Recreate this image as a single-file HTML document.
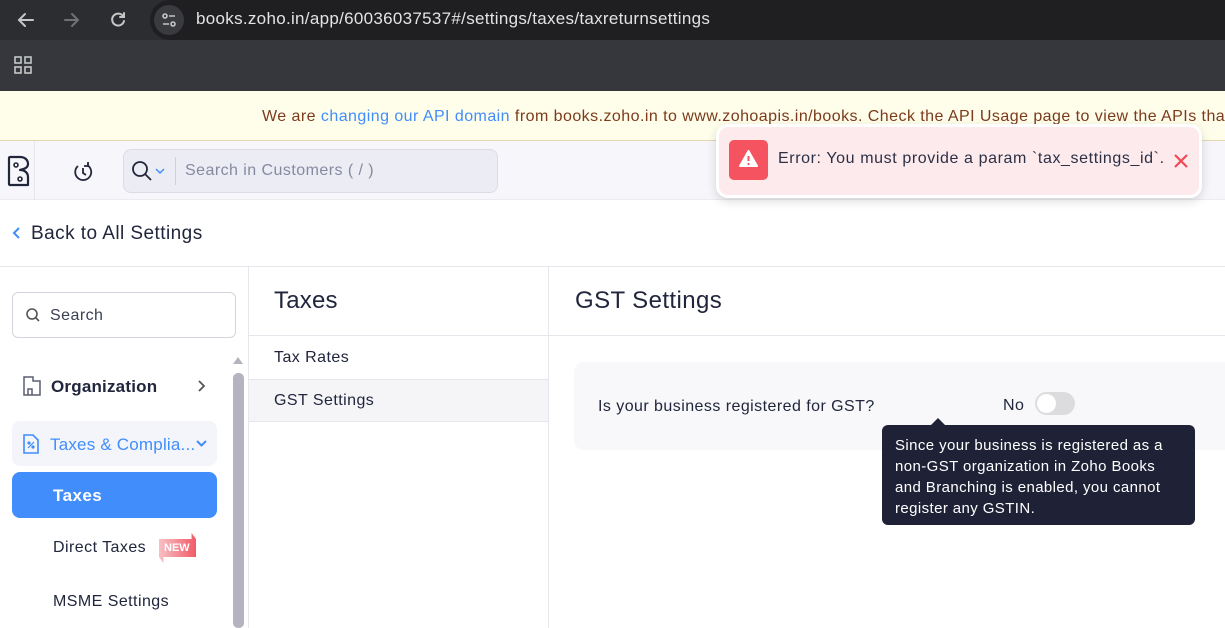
<!DOCTYPE html>
<html><head><style>
*{margin:0;padding:0;box-sizing:border-box}
body{width:1225px;height:628px;overflow:hidden;font-family:"Liberation Sans",sans-serif;background:#fff;position:relative;color:#21263c;letter-spacing:0.45px}
.a{position:absolute;white-space:nowrap}
</style></head><body>
<div class="a" style="left:0;top:0;width:1225px;height:40px;background:#2c2d31"></div>
<div class="a" style="left:150px;top:0;width:1075px;height:40px;background:#1f1f22;border-radius:20px 0 0 20px"></div>
<svg class="a" style="left:14px;top:8px" width="120" height="24" viewBox="0 0 120 24" fill="none" stroke-width="2" stroke-linecap="round">
<path d="M19 12H6M11 6l-6 6 6 6" stroke="#c4c7c5"/>
<path d="M51 12h13M58 6l6 6-6 6" stroke="#6f7175"/>
<path d="M109 8a6 6 0 1 0 1 5M110 5v4h-4" stroke="#c4c7c5"/>
</svg>
<div class="a" style="left:154px;top:5px;width:30px;height:30px;border-radius:15px;background:#3a3b3f"></div>
<svg class="a" style="left:161px;top:12px" width="16" height="16" viewBox="0 0 16 16" fill="none" stroke="#c4c7c5" stroke-width="1.6"><circle cx="4" cy="4" r="2"/><path d="M8 4h6M2 12h6"/><circle cx="12" cy="12" r="2"/></svg>
<div class="a" style="left:196px;top:9px;font-size:17px;color:#e3e3e3;letter-spacing:0.3px">books.zoho.in/app/60036037537#/settings/taxes/taxreturnsettings</div>
<div class="a" style="left:0;top:40px;width:1225px;height:51px;background:#36373c"></div>
<svg class="a" style="left:14px;top:56px" width="19" height="19" viewBox="0 0 19 19" fill="none" stroke="#c4c7c5" stroke-width="1.6"><rect x="1" y="1" width="6" height="6"/><rect x="11" y="1" width="6" height="6"/><rect x="1" y="11" width="6" height="6"/><rect x="11" y="11" width="6" height="6"/></svg>
<div class="a" style="left:0;top:91px;width:1225px;height:50px;background:#fefeeb;border-bottom:1px solid #e3d6b0"></div>
<div class="a" style="left:262px;top:108px;font-size:16px;color:#7d3a1c">We are <span style="color:#408dfb">changing our API domain</span> from books.zoho.in to www.zohoapis.in/books. Check the API Usage page to view the APIs that</div>
<div class="a" style="left:0;top:141px;width:1225px;height:59px;background:#f7f7fb;border-bottom:1px solid #ebebf0"></div>
<div class="a" style="left:0;top:141px;width:35px;height:59px;border-right:1px solid #e5e5ec"></div>
<svg class="a" style="left:7px;top:155px" width="24" height="33" viewBox="0 0 24 33" fill="none" stroke="#22263a" stroke-width="2.2" stroke-linejoin="round"><path d="M3 2h10c5 0 8 3 8 7s-4 5-8 6c5 0 8 3 8 7v8H3c-1 0-1-1-1-1V3c0-1 1-1 1-1z"/><circle cx="9" cy="10" r="2" stroke-width="1.6"/><circle cx="13" cy="24" r="2" stroke-width="1.6"/></svg>
<svg class="a" style="left:72px;top:161px" width="22" height="22" viewBox="0 0 22 22" fill="none" stroke="#22263a" stroke-width="1.8"><path d="M15 4a8 8 0 1 1-9 1"/><path d="M16 1v4h-4"/><path d="M11 7v5l3 2"/></svg>
<div class="a" style="left:123px;top:149px;width:375px;height:44px;background:#ececf4;border:1px solid #dcdce6;border-radius:8px"></div>
<svg class="a" style="left:131px;top:160px" width="22" height="22" viewBox="0 0 22 22" fill="none" stroke="#22263a" stroke-width="1.8"><circle cx="9" cy="9" r="7"/><path d="M14 14l6 6"/></svg>
<svg class="a" style="left:155px;top:167px" width="10" height="8" viewBox="0 0 10 8" fill="none" stroke="#408dfb" stroke-width="1.5"><path d="M1 2l4 4 4-4"/></svg>
<div class="a" style="left:175px;top:157px;width:1px;height:28px;background:#d0d0da"></div>
<div class="a" style="left:185px;top:162px;font-size:16px;color:#868aa0">Search in Customers ( / )</div>
<div class="a" style="left:0;top:266px;width:1225px;height:1px;background:#e6e6ec"></div>
<svg class="a" style="left:12px;top:227px" width="10" height="12" viewBox="0 0 10 12" fill="none" stroke="#408dfb" stroke-width="2"><path d="M7 1L2 6l5 5"/></svg>
<div class="a" style="left:31px;top:223px;font-size:19px;color:#21263c">Back to All Settings</div>
<div class="a" style="left:248px;top:267px;width:1px;height:361px;background:#e6e6ec"></div>
<div class="a" style="left:548px;top:267px;width:1px;height:361px;background:#e6e6ec"></div>
<div class="a" style="left:12px;top:292px;width:224px;height:46px;border:1px solid #d4d4dc;border-radius:6px"></div>
<svg class="a" style="left:25px;top:307px" width="16" height="16" viewBox="0 0 16 16" fill="none" stroke="#555" stroke-width="1.6"><circle cx="7" cy="7" r="5"/><path d="M11 11l3 3"/></svg>
<div class="a" style="left:50px;top:307px;font-size:16px;color:#3b3f52">Search</div>
<svg class="a" style="left:232px;top:355px" width="12" height="10" viewBox="0 0 12 10"><path d="M1 9L6 2l5 7z" fill="#b4b4bf"/></svg>
<div class="a" style="left:233px;top:373px;width:11px;height:255px;background:#b4b3c0;border-radius:5px"></div>
<svg class="a" style="left:22px;top:375px" width="20" height="22" viewBox="0 0 20 22" fill="none" stroke="#5a5e70" stroke-width="1.5"><path d="M2 2h9v4h7v14H2z"/><path d="M6 20v-6h4v6"/></svg>
<div class="a" style="left:51px;top:377px;font-size:17px;font-weight:bold;color:#21263c;letter-spacing:0.2px">Organization</div>
<svg class="a" style="left:197px;top:380px" width="9" height="12" viewBox="0 0 9 12" fill="none" stroke="#555" stroke-width="1.8"><path d="M2 1l5 5-5 5"/></svg>
<div class="a" style="left:12px;top:421px;width:205px;height:45px;background:#f4f5fb;border-radius:8px"></div>
<svg class="a" style="left:22px;top:433px" width="18" height="22" viewBox="0 0 18 22" fill="none" stroke="#408dfb" stroke-width="1.6"><path d="M2 2h9l5 5v13H2z"/><path d="M6 15l6-6" stroke-width="1.2"/><circle cx="7" cy="10" r=".8"/><circle cx="11" cy="14" r=".8"/></svg>
<div class="a" style="left:50px;top:435px;font-size:17px;color:#408dfb;letter-spacing:0.2px">Taxes &amp; Complia...</div>
<svg class="a" style="left:196px;top:440px" width="11" height="8" viewBox="0 0 11 8" fill="none" stroke="#408dfb" stroke-width="2"><path d="M1 1l4.5 4.5L10 1"/></svg>
<div class="a" style="left:12px;top:472px;width:205px;height:46px;background:#408dfb;border-radius:8px"></div>
<div class="a" style="left:53px;top:486px;font-size:17px;font-weight:bold;color:#fff">Taxes</div>
<div class="a" style="left:53px;top:539px;font-size:16px;color:#21263c">Direct Taxes</div>
<div class="a" style="left:159px;top:533px;width:37px;height:30px;background:linear-gradient(90deg,#f8c0c5,#f15a67);clip-path:polygon(0 20%,88% 20%,88% 0,100% 20%,100% 80%,12% 80%,12% 100%,0 80%)"></div>
<div class="a" style="left:164px;top:542px;font-size:11px;font-weight:bold;color:#fff;letter-spacing:0">NEW</div>
<div class="a" style="left:53px;top:593px;font-size:16px;color:#21263c">MSME Settings</div>
<div class="a" style="left:274px;top:287px;font-size:24px;color:#21263c;letter-spacing:0.2px">Taxes</div>
<div class="a" style="left:249px;top:335px;width:299px;height:1px;background:#e6e6ec"></div>
<div class="a" style="left:274px;top:349px;font-size:16px;color:#21263c">Tax Rates</div>
<div class="a" style="left:249px;top:379px;width:299px;height:43px;background:#f5f5f8;border-top:1px solid #e6e6ec;border-bottom:1px solid #e6e6ec"></div>
<div class="a" style="left:274px;top:392px;font-size:16px;color:#21263c">GST Settings</div>
<div class="a" style="left:575px;top:287px;font-size:24px;color:#21263c;letter-spacing:0.4px">GST Settings</div>
<div class="a" style="left:549px;top:335px;width:676px;height:1px;background:#e6e6ec"></div>
<div class="a" style="left:574px;top:362px;width:680px;height:88px;background:#f8f8fa;border-radius:10px"></div>
<div class="a" style="left:598px;top:398px;font-size:16px;color:#21263c">Is your business registered for GST?</div>
<div class="a" style="left:1003px;top:397px;font-size:16px;color:#21263c">No</div>
<div class="a" style="left:1035px;top:392px;width:40px;height:23px;background:#dcdcde;border-radius:12px"></div>
<div class="a" style="left:1037px;top:394px;width:19px;height:19px;background:#fff;border-radius:50%"></div>
<div class="a" style="left:930px;top:418px;width:0;height:0;border-left:8px solid transparent;border-right:8px solid transparent;border-bottom:8px solid #1f2237"></div>
<div class="a" style="left:882px;top:425px;width:313px;height:100px;background:#1f2237;border-radius:6px;padding:10px 0 0 13px;font-size:15px;line-height:21px;color:#fff;letter-spacing:0.4px">Since your business is registered as a<br>non-GST organization in Zoho Books<br>and Branching is enabled, you cannot<br>register any GSTIN.</div>
<div class="a" style="left:716px;top:124px;width:486px;height:74px;background:#fdeaec;border:3px solid #fff;border-radius:12px;box-shadow:0 3px 10px rgba(0,0,0,.15)"></div>
<div class="a" style="left:729px;top:140px;width:39px;height:40px;background:#f5535f;border-radius:5px"></div>
<svg class="a" style="left:739px;top:150px" width="19" height="18" viewBox="0 0 19 18"><path d="M9.5 1L18 16H1z" fill="#fff" stroke="#fff" stroke-linejoin="round" stroke-width="2"/><path d="M9.5 6v5" stroke="#f5535f" stroke-width="2"/><circle cx="9.5" cy="14" r="1.1" fill="#f5535f"/></svg>
<div class="a" style="left:778px;top:150px;font-size:16px;color:#2c3045;letter-spacing:0.6px">Error: You must provide a param `tax_settings_id`.</div>
<svg class="a" style="left:1174px;top:154px" width="14" height="14" viewBox="0 0 14 14" stroke="#f04a55" stroke-width="2.2"><path d="M1 1l12 12M13 1L1 13"/></svg>
</body></html>
